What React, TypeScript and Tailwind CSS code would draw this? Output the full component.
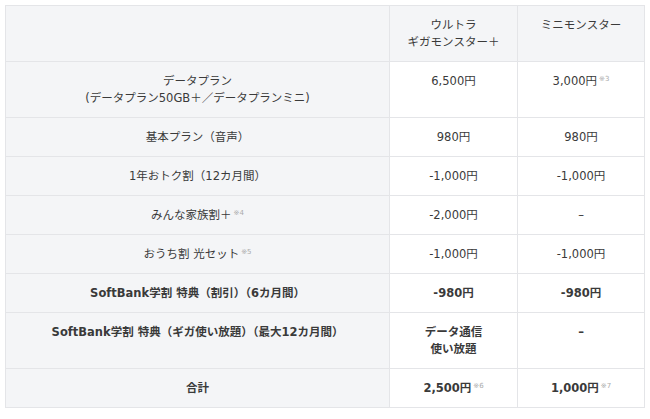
import React from "react";

const Sup = ({ children }: { children: React.ReactNode }) => (
  <span className="relative -top-[4px] ml-[2px] text-[7px] leading-none text-[#aaa] font-normal">{children}</span>
);

const cell = "border border-[#e4e5e8] px-2 pt-[11px] pb-[10px] text-center align-top";
const lab = cell + " bg-[#f4f5f7]";
const val = cell + " bg-white";

export default function App() {
  return (
    <div
      className="bg-white w-[650px] h-[419px] pt-[5px] pl-[5px]"
      style={{ fontFamily: '"DejaVu Sans", "Noto Sans CJK JP", sans-serif' }}
    >
      <table className="w-[639px] border-collapse table-fixed text-[#3a3a3a] text-[11.5px] leading-[17px]">
        <colgroup>
          <col className="w-[384px]" />
          <col className="w-[128px]" />
          <col className="w-[127px]" />
        </colgroup>
        <tbody>
          <tr>
            <td className={lab}>
              <br />
              <br />
            </td>
            <td className={lab}>
              ウルトラ
              <br />
              ギガモンスター＋
            </td>
            <td className={lab}>ミニモンスター</td>
          </tr>
          <tr>
            <td className={lab}>
              データプラン
              <br />
              (データプラン50GB＋／データプランミニ)
            </td>
            <td className={val}>6,500円</td>
            <td className={val}>
              3,000円<Sup>※3</Sup>
            </td>
          </tr>
          <tr>
            <td className={lab}>基本プラン（音声）</td>
            <td className={val}>980円</td>
            <td className={val}>980円</td>
          </tr>
          <tr>
            <td className={lab}>1年おトク割（12カ月間）</td>
            <td className={val}>-1,000円</td>
            <td className={val}>-1,000円</td>
          </tr>
          <tr>
            <td className={lab}>
              みんな家族割＋<Sup>※4</Sup>
            </td>
            <td className={val}>-2,000円</td>
            <td className={val}>–</td>
          </tr>
          <tr>
            <td className={lab}>
              おうち割 光セット<Sup>※5</Sup>
            </td>
            <td className={val}>-1,000円</td>
            <td className={val}>-1,000円</td>
          </tr>
          <tr className="font-bold">
            <td className={lab}>SoftBank学割 特典（割引）（6カ月間）</td>
            <td className={val}>-980円</td>
            <td className={val}>-980円</td>
          </tr>
          <tr className="font-bold">
            <td className={lab}>SoftBank学割 特典（ギガ使い放題）（最大12カ月間）</td>
            <td className={val}>
              データ通信
              <br />
              使い放題
            </td>
            <td className={val}>–</td>
          </tr>
          <tr className="font-bold">
            <td className={lab}>合計</td>
            <td className={val}>
              2,500円<Sup>※6</Sup>
            </td>
            <td className={val}>
              1,000円<Sup>※7</Sup>
            </td>
          </tr>
        </tbody>
      </table>
    </div>
  );
}
